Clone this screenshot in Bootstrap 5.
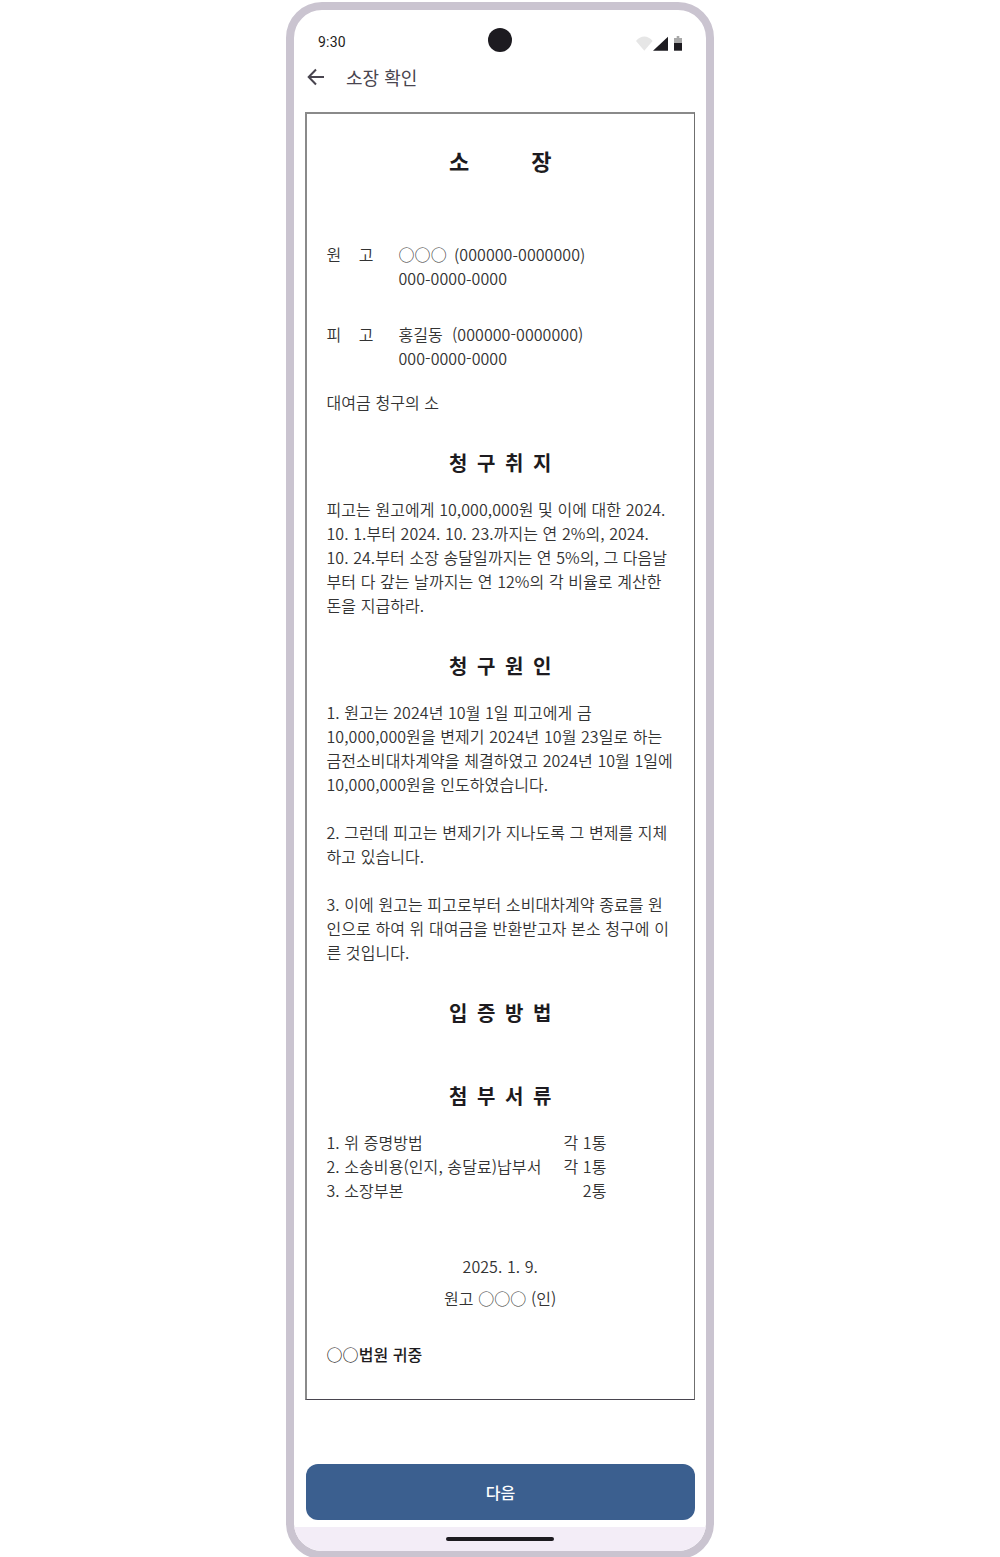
<!DOCTYPE html>
<html lang="ko">
<head>
<meta charset="utf-8">
<link href="https://cdn.jsdelivr.net/npm/bootstrap@5.3.0/dist/css/bootstrap.min.css" rel="stylesheet">
<style>
html,body{background:#fff;margin:0;height:1557px;overflow:hidden}
body{font-family:"Noto Sans CJK KR","Noto Sans",sans-serif;color:#1d1b20}
.phone{width:428px;height:1557px;margin:2px auto 0;border:8px solid #cac4d0;border-radius:36px;overflow:hidden;background:#fff}
.statusbar{height:52px;padding:0 24px;position:relative}
.clock{font-family:Roboto,sans-serif;font-size:14px;letter-spacing:.2px;line-height:20px;margin-top:22px}
.camera{position:absolute;left:194px;top:18px;width:24px;height:24px;border-radius:50%;background:#1d1b20}
.sysicons{margin-top:26px}
.topbar{height:50px;padding:0 12px 20px;font-size:18px;line-height:24px;color:#49454f;gap:20px}
.docbox{margin:0 11px;height:1288px;border-style:solid;border-width:2px 1px 1px 2px;border-color:#8a8a8a #6f6f6f #49454f #8a8a8a;padding:0 20px 0 19.5px;font-size:16px;line-height:24px;color:#333;font-weight:350;letter-spacing:.07px}
.doctitle{font-size:20px;font-weight:700;color:#1d1b20;text-align:center;line-height:30px;letter-spacing:2px;margin-top:34px;padding-left:2px}
.maintitle{font-size:22px;letter-spacing:6px;margin-top:31px;padding-left:6px}
.afterhead{margin-top:19px}
.plabel{width:72px;flex:none;letter-spacing:.5px}
.signbold{font-weight:500;color:#1d1b20}
.actionbtn{display:block;margin:0 11px 0 12px;width:389px;height:56px;background:#3b5f8f;color:#fff;border:0;border-radius:12px;font-size:16px;font-weight:500}
.navstrip{height:24px;background:#f3edf7;margin-top:7px;position:relative}
.homebar{position:absolute;left:152px;top:10px;width:108px;height:4px;border-radius:2px;background:#1d1b20}
.attach{width:235px;flex:none}
.count{width:45px;text-align:right;flex:none}
</style>
</head>
<body>
<div class="phone">
  <div class="statusbar d-flex justify-content-between">
    <div class="clock">9:30</div>
    <div class="camera"></div>
    <svg class="sysicons" width="46" height="15" viewBox="0 0 46 15"><path d="M0 5C4.5-1 12-1 16.6 5L8.3 14.7z" fill="#e6e6e6"/><path d="M17 14.7L32 .7v14z" fill="#1d1b20"/><rect x="38" y="2" width="8" height="5" fill="#a9a9a9"/><rect x="40.7" y="0" width="2.6" height="2" fill="#a9a9a9"/><rect x="38" y="7" width="8" height="7.7" fill="#1d1b20"/></svg>
  </div>
  <div class="topbar d-flex align-items-center">
    <svg width="20" height="20" viewBox="0 0 20 20"><path d="M18 10H3M10 2.5L2.7 10l7.3 7.5" fill="none" stroke="#49454f" stroke-width="2"/></svg>
    <div>소장 확인</div>
  </div>
  <div class="docbox">
    <div class="doctitle maintitle">소&emsp;&emsp;장</div>
    <div class="d-flex" style="margin-top:67px"><div class="plabel">원&ensp;&ensp;고</div><div>○○○&nbsp;&nbsp;(000000-0000000)<br>000-0000-0000</div></div>
    <div class="d-flex" style="margin-top:32px"><div class="plabel">피&ensp;&ensp;고</div><div>홍길동&nbsp;&nbsp;(000000-0000000)<br>000-0000-0000</div></div>
    <div style="margin-top:20px">대여금 청구의 소</div>
    <div class="doctitle">청 구 취 지</div>
    <div class="afterhead">피고는 원고에게 10,000,000원 및 이에 대한 2024.<br>10. 1.부터 2024. 10. 23.까지는 연 2%의, 2024.<br>10. 24.부터 소장 송달일까지는 연 5%의, 그 다음날<br>부터 다 갚는 날까지는 연 12%의 각 비율로 계산한<br>돈을 지급하라.</div>
    <div class="doctitle">청 구 원 인</div>
    <div class="afterhead">1. 원고는 2024년 10월 1일 피고에게 금<br>10,000,000원을 변제기 2024년 10월 23일로 하는<br>금전소비대차계약을 체결하였고 2024년 10월 1일에<br>10,000,000원을 인도하였습니다.</div>
    <div style="margin-top:24px">2. 그런데 피고는 변제기가 지나도록 그 변제를 지체<br>하고 있습니다.</div>
    <div style="margin-top:24px">3. 이에 원고는 피고로부터 소비대차계약 종료를 원<br>인으로 하여 위 대여금을 반환받고자 본소 청구에 이<br>른 것입니다.</div>
    <div class="doctitle">입 증 방 법</div>
    <div class="doctitle" style="margin-top:53px">첨 부 서 류</div>
    <div class="afterhead">
      <div class="d-flex"><div class="attach">1. 위 증명방법</div><div class="count">각 1통</div></div>
      <div class="d-flex"><div class="attach">2. 소송비용(인지, 송달료)납부서</div><div class="count">각 1통</div></div>
      <div class="d-flex"><div class="attach">3. 소장부본</div><div class="count">2통</div></div>
    </div>
    <div class="text-center" style="margin-top:52px">2025. 1. 9.</div>
    <div class="text-center" style="margin-top:8px">원고 ○○○ (인)</div>
    <div class="signbold" style="margin-top:32px">○○법원 귀중</div>
  </div>
  <div style="height:64px"></div>
  <button class="actionbtn" type="button">다음</button>
  <div class="navstrip"><div class="homebar"></div></div>
</div>
<script src="https://cdn.jsdelivr.net/npm/bootstrap@5.3.0/dist/js/bootstrap.bundle.min.js"></script>
</body>
</html>
